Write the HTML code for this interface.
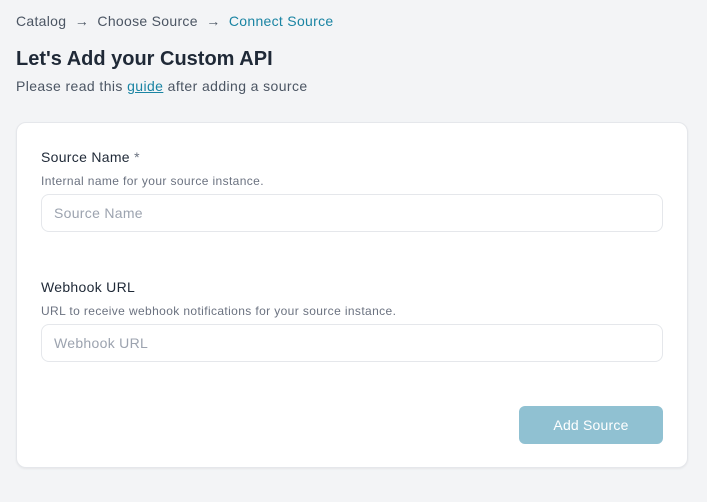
<!DOCTYPE html>
<html><head><style>
*{box-sizing:border-box;margin:0;padding:0}
body{width:707px;height:502px;background:#f3f4f6;font-family:"Liberation Sans",sans-serif;position:relative;overflow:hidden;color:#1f2937}
.abs{position:absolute;white-space:nowrap}
.crumb{top:13px;left:16px;font-size:14px;color:#4b5563;letter-spacing:0.3px}
.crumb .c{color:#1a84a3}
h1{position:absolute;top:48px;left:16px;font-size:20px;font-weight:bold;color:#1f2937}
.sub{top:78px;left:16px;font-size:14px;color:#4b5563;letter-spacing:0.4px}
.sub a{color:#1a84a3;text-decoration:underline}
.card{position:absolute;left:16px;top:122px;width:672px;height:346px;background:#fff;border:1px solid #e5e7eb;border-radius:10px;box-shadow:0 1px 2px rgba(0,0,0,.06)}
.lbl{font-size:14px;color:#1f2937;letter-spacing:0.3px}
.hint{font-size:12px;color:#6b7280;letter-spacing:0.38px}
.inp{position:absolute;left:41px;width:622px;height:38px;border:1px solid #e5e7eb;border-radius:8px;font-size:14px;color:#9ca3af;padding:10px 12px;letter-spacing:0.3px}
.btn{position:absolute;left:519px;top:406px;width:144px;height:38px;background:#90c1d2;border-radius:6px;color:#fff;font-size:14px;text-align:center;line-height:38px;letter-spacing:0.2px}
</style></head><body>
<div class="abs crumb">Catalog &nbsp;→&nbsp; Choose Source &nbsp;→&nbsp; <span class="c">Connect Source</span></div>
<h1>Let's Add your Custom API</h1>
<div class="abs sub">Please read this <a>guide</a> after adding a source</div>
<div class="card"></div>
<div class="abs lbl" style="left:41px;top:149px">Source Name <span style="color:#6b7280">*</span></div>
<div class="abs hint" style="left:41px;top:174px">Internal name for your source instance.</div>
<div class="inp" style="top:194px">Source Name</div>
<div class="abs lbl" style="left:41px;top:279px">Webhook URL</div>
<div class="abs hint" style="left:41px;top:304px">URL to receive webhook notifications for your source instance.</div>
<div class="inp" style="top:324px">Webhook URL</div>
<div class="btn">Add Source</div>
</body></html>
